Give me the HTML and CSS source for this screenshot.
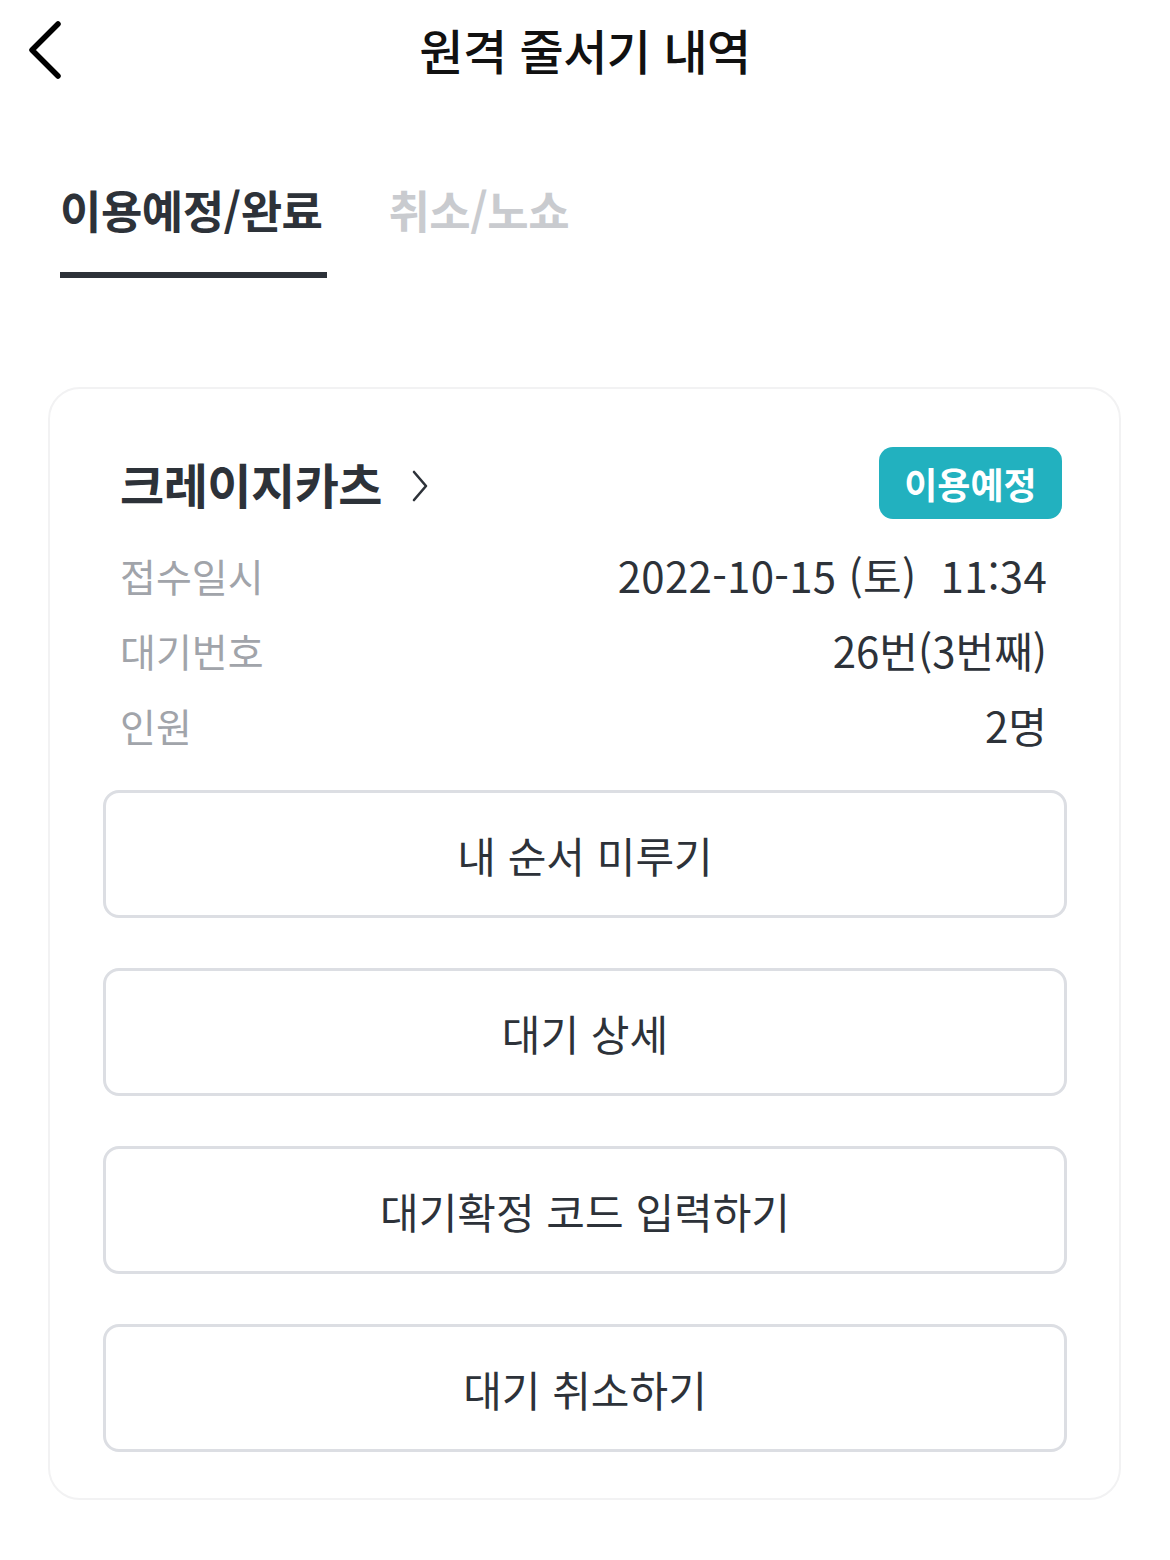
FILE: index.html
```html
<!DOCTYPE html>
<html lang="ko">
<head>
<meta charset="utf-8">
<link rel="stylesheet" href="styles.css">
</head>
<body>
<div class="page">
  <header class="topbar">
    <button class="back" aria-label="뒤로">
      <svg width="40" height="60" viewBox="0 0 40 60"><path d="M32 4 L6 30 L32 56" fill="none" stroke="#000" stroke-width="5.5" stroke-linecap="round" stroke-linejoin="round"/></svg>
    </button>
    <h1 class="title">원격 줄서기 내역</h1>
  </header>

  <nav class="tabs">
    <div class="tab active">이용예정/완료</div>
    <div class="tab">취소/노쇼</div>
  </nav>

  <section class="card">
    <div class="card-head">
      <div class="store">크레이지카츠
        <svg class="chev" width="20" height="34" viewBox="0 0 20 34"><path d="M4 3 L16 17 L4 31" fill="none" stroke="#2d3239" stroke-width="2.6" stroke-linecap="round" stroke-linejoin="round"/></svg>
      </div>
      <span class="badge">이용예정</span>
    </div>
    <dl class="info">
      <div class="row"><dt>접수일시</dt><dd class="date">2022-10-15 (토)&nbsp; 11:34</dd></div>
      <div class="row"><dt>대기번호</dt><dd>26번(3번째)</dd></div>
      <div class="row"><dt>인원</dt><dd>2명</dd></div>
    </dl>
    <div class="actions">
      <button class="btn">내 순서 미루기</button>
      <button class="btn">대기 상세</button>
      <button class="btn">대기확정 코드 입력하기</button>
      <button class="btn">대기 취소하기</button>
    </div>
  </section>
</div>
</body>
</html>
```

FILE: styles.css
```css
* { box-sizing: border-box; }
html, body { margin: 0; padding: 0; background: #fff; }
body {
  font-family: "Noto Sans CJK KR", "Noto Sans", sans-serif;
  color: #2d3239;
  width: 1170px;
}
.page { width: 1170px; }

.topbar {
  position: relative;
  height: 100px;
  display: flex;
  align-items: center;
  justify-content: center;
}
.back {
  position: absolute;
  left: 26px;
  top: 20px;
  padding: 0;
  border: 0;
  background: none;
  width: 40px;
  height: 60px;
}
.back svg { display: block; }
.title {
  margin: -3px 0 0 0;
  font-size: 48px;
  font-weight: 500;
  color: #111;
  letter-spacing: -0.5px;
  line-height: 1;
}

.tabs {
  display: flex;
  gap: 61px;
  padding: 0 0 0 60px;
  margin-top: 87px;
}
.tab {
  font-size: 45px;
  font-weight: 700;
  color: #c9cbcf;
  line-height: 1;
  padding-bottom: 40px;
  letter-spacing: -0.5px;
}
.tab.active {
  color: #2d3239;
  border-bottom: 6px solid #2d3239;
  padding-right: 5px;
}

.card {
  margin: 109px 49px 0 48px;
  border: 2px solid #f2f2f3;
  border-radius: 32px;
  padding: 58px 52px 46px 53px;
}
.card-head {
  display: flex;
  align-items: center;
  justify-content: space-between;
  padding-left: 17px;
  padding-right: 5px;
  height: 72px;
}
.store {
  font-size: 48px;
  font-weight: 700;
  color: #2d3239;
  display: flex;
  align-items: center;
  gap: 28px;
  letter-spacing: -0.5px;
}
.chev { display: block; margin-top: 6px; }
.badge {
  background: #22b1bf;
  color: #fff;
  font-size: 36px;
  font-weight: 700;
  border-radius: 14px;
  width: 183px;
  height: 72px;
  display: flex;
  align-items: center;
  justify-content: center;
}

.info {
  margin: 18px 0 0 0;
  padding: 0 20px 0 17px;
}
.row {
  display: flex;
  justify-content: space-between;
  align-items: center;
  height: 75px;
}
.row dt {
  font-size: 39px;
  color: #a1a4aa;
  margin: 0;
}
.row dd {
  margin: 0;
  font-size: 42px;
  color: #2d3239;
}
.row dd.date { letter-spacing: 0.3px; }

.actions {
  display: flex;
  flex-direction: column;
  gap: 50px;
  margin-top: 28px;
}
.btn {
  height: 128px;
  width: 100%;
  border: 3px solid #dcdee3;
  border-radius: 16px;
  background: #fff;
  font-family: "Noto Sans CJK KR", "Noto Sans", sans-serif;
  font-size: 42px;
  color: #2d3239;
  padding: 0;
}
```
